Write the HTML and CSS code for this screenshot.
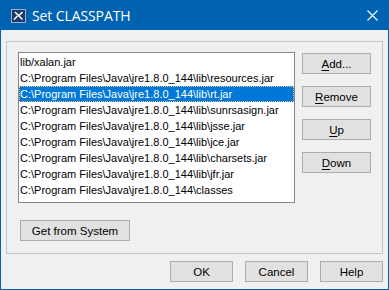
FILE: index.html
```html
<!DOCTYPE html>
<html lang="en">
<head>
  <meta charset="UTF-8">
  <title>Set CLASSPATH</title>
  <link rel="stylesheet" href="styles.css">
</head>
<body>
  <div class="window">
    <div class="titlebar">
      <svg class="app-icon" width="15" height="14" viewBox="0 0 15 14">
        <rect x="0.5" y="0.5" width="14" height="13" fill="#1d3a6b" stroke="#9fb0cc"/>
        <path d="M3 10.5 L6.5 7 M4 3 L11.5 10.5 M11.5 3 L8 6.5" stroke="#ffffff" stroke-width="1.5" fill="none"/>
      </svg>
      <span class="title">Set CLASSPATH</span>
      <svg class="close" width="11" height="11" viewBox="0 0 11 11">
        <path d="M0.5 0.5 L10.5 10.5 M10.5 0.5 L0.5 10.5" stroke="#ffffff" stroke-width="1.1"/>
      </svg>
    </div>

    <div class="content">
      <div class="panel">
        <div class="top-row">
          <div class="list">
            <div class="item">lib/xalan.jar</div>
            <div class="item">C:\Program Files\Java\jre1.8.0_144\lib\resources.jar</div>
            <div class="item selected">C:\Program Files\Java\jre1.8.0_144\lib\rt.jar</div>
            <div class="item">C:\Program Files\Java\jre1.8.0_144\lib\sunrsasign.jar</div>
            <div class="item">C:\Program Files\Java\jre1.8.0_144\lib\jsse.jar</div>
            <div class="item">C:\Program Files\Java\jre1.8.0_144\lib\jce.jar</div>
            <div class="item">C:\Program Files\Java\jre1.8.0_144\lib\charsets.jar</div>
            <div class="item">C:\Program Files\Java\jre1.8.0_144\lib\jfr.jar</div>
            <div class="item">C:\Program Files\Java\jre1.8.0_144\classes</div>
          </div>
          <div class="side-buttons">
            <button class="btn side"><u>A</u>dd...</button>
            <button class="btn side"><u>R</u>emove</button>
            <button class="btn side"><u>U</u>p</button>
            <button class="btn side"><u>D</u>own</button>
          </div>
        </div>
        <button class="btn system">Get from System</button>
      </div>

      <div class="footer">
        <button class="btn dlg">OK</button>
        <button class="btn dlg">Cancel</button>
        <button class="btn dlg">Help</button>
      </div>
    </div>
  </div>
</body>
</html>
```

FILE: styles.css
```css
:root {
  --title-bg: #0063b1;
  --face: #f0f0f0;
  --btn-bg: #e1e1e1;
  --btn-border: #adadad;
  --select-bg: #0078d7;
}

* {
  box-sizing: border-box;
}

body {
  margin: 0;
  font-family: 'Liberation Sans', Arial, sans-serif;
  font-size: 11.5px;
  color: #000;
  background: var(--face);
}

.window {
  width: 389px;
  height: 290px;
  display: flex;
  flex-direction: column;
}

.titlebar {
  height: 30px;
  background: var(--title-bg);
  color: #fff;
  display: flex;
  align-items: center;
  padding: 0 11px;
}

.app-icon {
  margin-top: 1px;
}

.title {
  font-family: 'Open Sans', 'Noto Sans', sans-serif;
  font-size: 14px;
  margin-left: 6px;
  flex: 1;
  letter-spacing: -0.1px;
}

.content {
  flex: 1;
  border: 1px solid var(--title-bg);
  border-top: none;
  padding: 11px 5px 0 5px;
  display: flex;
  flex-direction: column;
}

.panel {
  height: 213px;
  border: 1px solid #c4c4c4;
  padding: 10px 10px 0 11px;
}

.top-row {
  display: flex;
}

.list {
  width: 277px;
  height: 151px;
  background: #fff;
  border: 1px solid #828790;
  padding: 1px 0 0 0;
  overflow: hidden;
}

.item {
  height: 16px;
  line-height: 16px;
  padding-left: 1px;
  white-space: nowrap;
  font-size: 11px;
}

.item.selected {
  background: var(--select-bg);
  color: #fff;
  outline: 1px dotted #f4c27a;
  outline-offset: -1px;
}

.side-buttons {
  margin-left: 7px;
  display: flex;
  flex-direction: column;
  gap: 12px;
  padding-top: 1px;
}

.btn {
  font-family: 'Liberation Sans', Arial, sans-serif;
  font-size: 11.5px;
  color: #000;
  background: var(--btn-bg);
  border: 1px solid var(--btn-border);
  height: 21px;
  padding: 0;
  margin: 0;
}

.btn u {
  text-decoration-thickness: 1px;
  text-underline-offset: 2px;
}

.side {
  width: 69px;
}

.system {
  width: 110px;
  margin-top: 17px;
  margin-left: 2px;
}

.footer {
  display: flex;
  justify-content: flex-end;
  gap: 12px;
  margin-top: 7px;
}

.dlg {
  width: 63px;
}
```
